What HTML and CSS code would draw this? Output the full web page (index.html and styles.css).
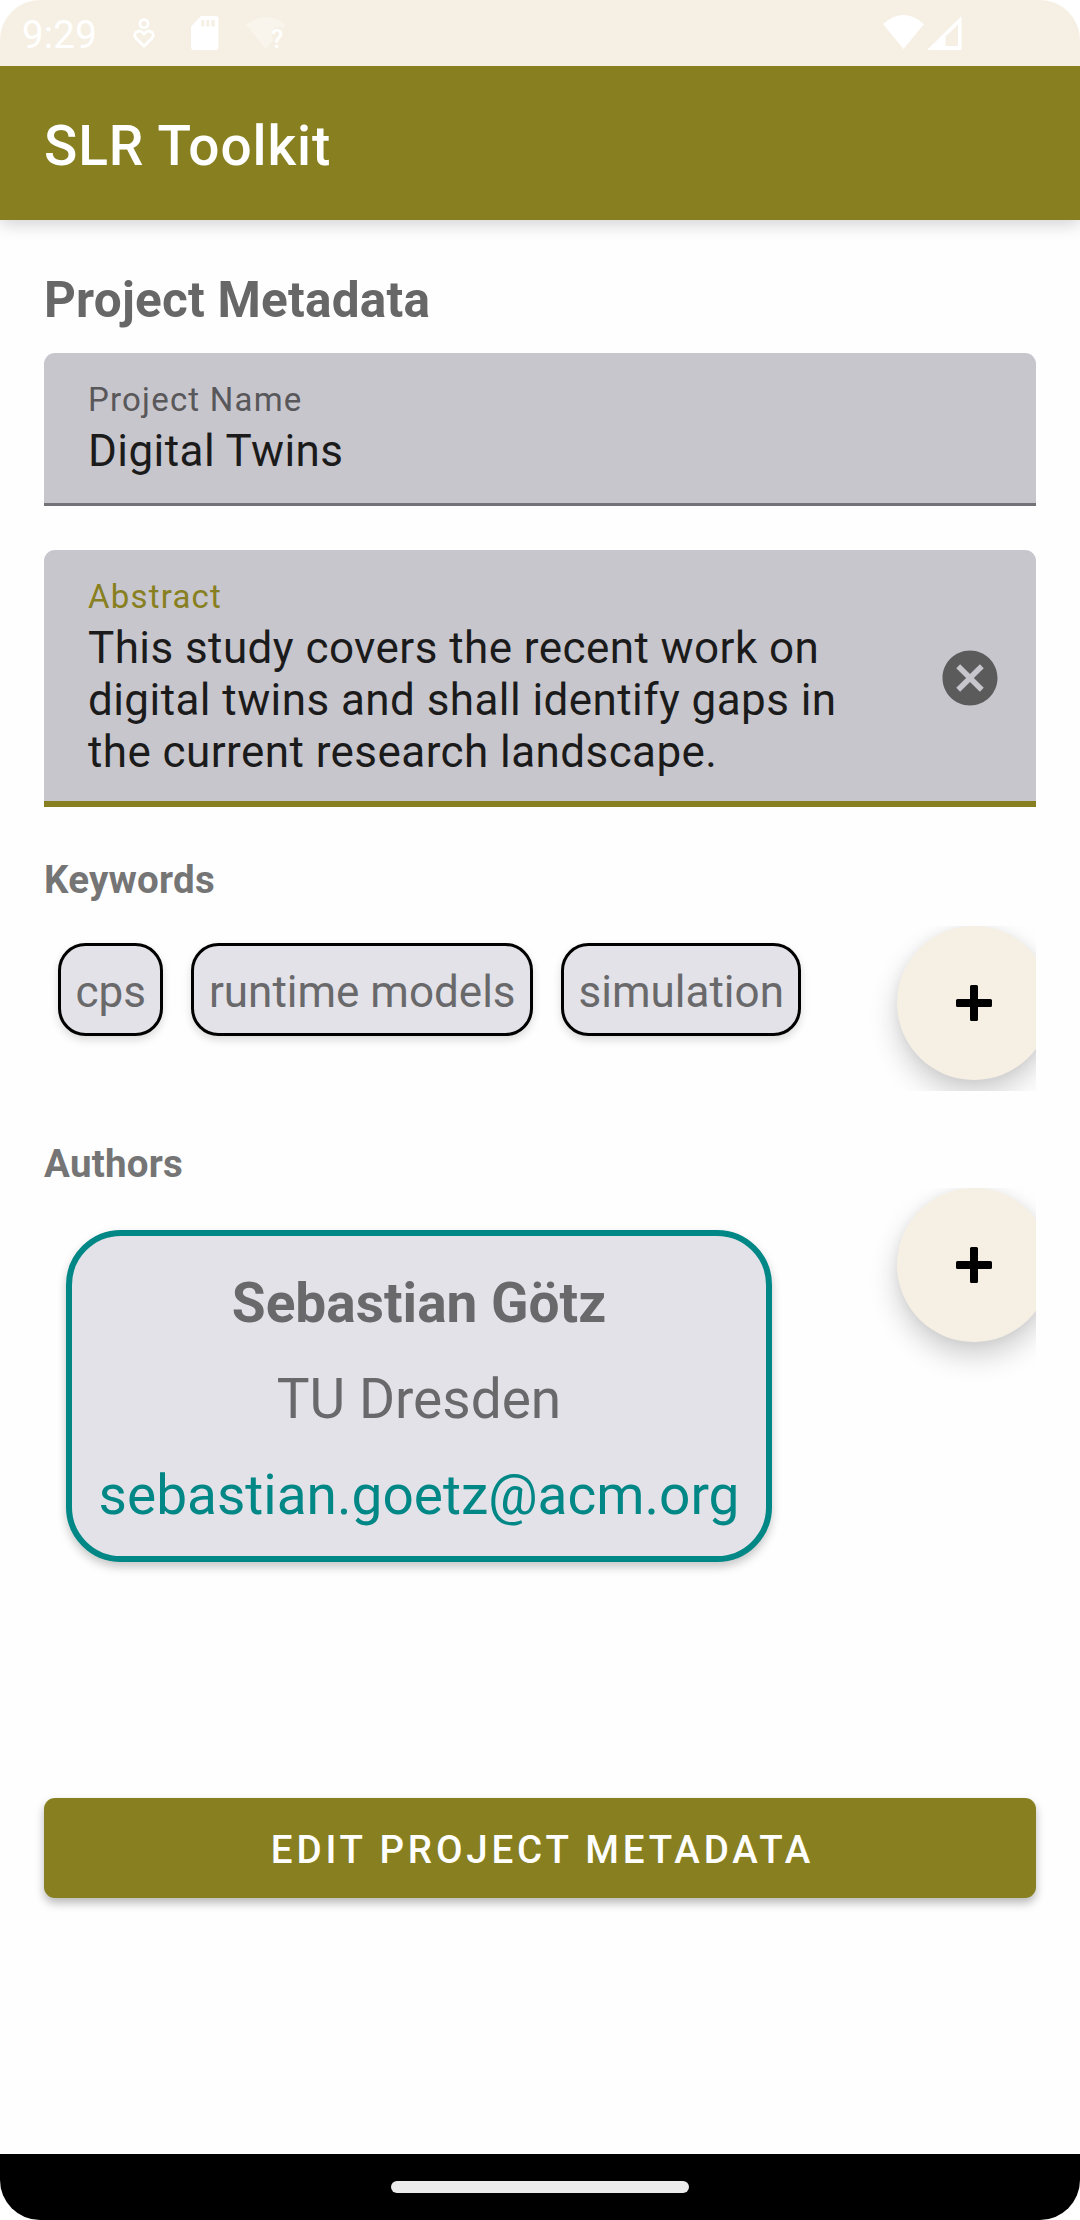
FILE: index.html
```html
<!DOCTYPE html>
<html lang="en">
<head>
<meta charset="utf-8">
<title>SLR Toolkit</title>
<link rel="stylesheet" href="styles.css">
</head>
<body>
<div class="screen">
  <div class="status-bar">
    <span class="clock">9:29</span>
    <svg class="icon-care" width="22" height="30" viewBox="0 0 22 30" fill="none" stroke="#fff">
      <circle cx="11" cy="5.7" r="4.1" stroke-width="2.7"/>
      <path d="M11 28L3 20.200C-1 16 5 10.500 9.500 14.500L11 16L12.500 14.500C17 10.500 23 16 19 20.200Z" stroke-width="2.900"/>
    </svg>
    <svg class="icon-sd" width="28" height="34" viewBox="0 0 28 34" fill="#fff" fill-rule="evenodd">
      <path d="M10 0H24.500A3 3 0 0 1 27.500 3V31A3 3 0 0 1 24.500 34H3A3 3 0 0 1 0 31V10.500ZM10.300 4V10.500H13.300V4ZM15.300 4V10.500H18.300V4ZM20.300 4V10.500H23.800V4Z"/>
    </svg>
    <span class="wifi-unknown">
      <svg width="40" height="34" viewBox="0 0 40 34"><path d="M0 7.500Q20 -7.500 39.500 7.500L37 11C30 8 25 13 26 18L27 24L19.500 32Z" fill="#fff" fill-opacity=".3"/></svg>
      <b class="wifi-mark">?</b>
    </span>
    <svg class="icon-wifi" width="41" height="34" viewBox="0 0 41 34"><path d="M0 9Q20.500 -9 41 9L20.500 34Z" fill="#fff"/></svg>
    <svg class="icon-signal" width="35" height="34" viewBox="0 0 35 34"><path d="M34.500 0V34H0ZM31 8.500L18.500 20.500V30H31Z" fill="#fff" fill-rule="evenodd"/></svg>
  </div>
  <header class="app-bar"><h1 class="app-title">SLR Toolkit</h1></header>
  <main class="content">
    <h2 class="page-title">Project Metadata</h2>
    <div class="field">
      <div class="field-text">
        <div class="field-label">Project Name</div>
        <div class="field-value">Digital Twins</div>
      </div>
    </div>
    <div class="field focused">
      <div class="field-text">
        <div class="field-label">Abstract</div>
        <div class="field-value">This study covers the recent work on<br>digital twins and shall identify gaps in<br>the current research landscape.</div>
      </div>
      <svg class="clear" width="66" height="66" viewBox="0 0 24 24" fill="#5b5b5c"><path d="M12 2C6.470 2 2 6.470 2 12s4.470 10 10 10 10-4.470 10-10S17.530 2 12 2zm5 13.590L15.590 17 12 13.410 8.410 17 7 15.590 10.590 12 7 8.410 8.410 7 12 10.590 15.590 7 17 8.410 13.410 12 17 15.590z"/></svg>
    </div>
    <h3 class="section-title">Keywords</h3>
    <div class="keywords">
      <span class="chip">cps</span>
      <span class="chip">runtime models</span>
      <span class="chip">simulation</span>
      <button class="fab" aria-label="Add keyword"><svg width="38" height="38" viewBox="0 0 38 38"><path d="M15 2.500Q15 1 16.500 1H21.500Q23 1 23 2.500V15H35.500Q37 15 37 16.500V21.500Q37 23 35.500 23H23V35.500Q23 37 21.500 37H16.500Q15 37 15 35.500V23H2.500Q1 23 1 21.500V16.500Q1 15 2.500 15H15Z"/></svg></button>
    </div>
    <h3 class="section-title">Authors</h3>
    <div class="authors">
      <div class="author-card">
        <div class="author-name">Sebastian Götz</div>
        <div>TU Dresden</div>
        <div class="author-mail">sebastian.goetz@acm.org</div>
      </div>
      <button class="fab" aria-label="Add author"><svg width="38" height="38" viewBox="0 0 38 38"><path d="M15 2.500Q15 1 16.500 1H21.500Q23 1 23 2.500V15H35.500Q37 15 37 16.500V21.500Q37 23 35.500 23H23V35.500Q23 37 21.500 37H16.500Q15 37 15 35.500V23H2.500Q1 23 1 21.500V16.500Q1 15 2.500 15H15Z"/></svg></button>
    </div>
    <button class="edit">EDIT PROJECT METADATA</button>
  </main>
  <div class="nav-bar"><div class="handle"></div></div>
</div>
</body>
</html>
```
FILE: styles.css
```css
* { box-sizing: border-box; }

body {
  margin: 0;
  background: #fff;
  font-family: Roboto, "Liberation Sans", sans-serif;
}

h1, h2, h3 { margin: 0; }

button {
  border: 0;
  padding: 0;
  font-family: inherit;
}

svg { display: block; flex: none; }

.screen {
  display: flex;
  flex-direction: column;
  width: 1080px;
  height: 2220px;
  border-radius: 40px;
  overflow: hidden;
  background: #fefefe;
}

.status-bar {
  display: flex;
  align-items: flex-start;
  height: 66px;
  padding: 15px 118px 0 22px;
  background: #f6f0e4;
  color: #fff;
}

.clock {
  width: 111px;
  font-size: 38.5px;
  line-height: 40px;
  letter-spacing: .2px;
}

.icon-care { margin-top: 3px; }
.icon-sd { margin: 1px 0 0 36px; }

.wifi-unknown {
  position: relative;
  margin: 2px 0 0 27px;
}

.wifi-mark {
  position: absolute;
  left: 25px;
  top: 10px;
  font-size: 25px;
  font-weight: 500;
  line-height: 26px;
}

.icon-wifi { margin-left: auto; }
.icon-signal { margin: 1px 0 0 3px; }

.app-bar {
  height: 154px;
  padding: 7px 44px 0;
  background: #888020;
  box-shadow: 0 4px 16px rgba(0, 0, 0, .18);
  clip-path: inset(0 0 -30px);
}

.app-title {
  font-size: 55px;
  font-weight: 500;
  line-height: 147px;
  letter-spacing: .9px;
  color: #fff;
}

.content {
  flex: 1;
  display: flex;
  flex-direction: column;
  padding: 51px 44px 0;
}

.page-title {
  margin-bottom: 24px;
  font-size: 49.5px;
  font-weight: 700;
  line-height: 58px;
  letter-spacing: .22px;
  color: #676767;
}

.field {
  display: flex;
  align-items: center;
  justify-content: space-between;
  height: 153px;
  margin-bottom: 44px;
  padding: 0 33px 0 44px;
  border-radius: 11px 11px 0 0;
  background: #c8c6cd;
  box-shadow: inset 0 -3px #737277;
}

.field.focused {
  height: 257px;
  margin-bottom: 0;
  box-shadow: inset 0 -6px #888020;
}

.field-text { align-self: flex-start; padding-top: 27px; }

.field-label {
  margin-bottom: 5px;
  font-size: 33px;
  line-height: 40px;
  letter-spacing: 1.2px;
  color: #58575a;
}

.focused .field-label { color: #888020; }

.field-value {
  font-size: 44px;
  line-height: 52px;
  letter-spacing: .43px;
  white-space: nowrap;
  color: #1b1b1b;
}

.clear { margin-bottom: 2px; }

.section-title {
  margin-top: 50px;
  font-size: 38.5px;
  font-weight: 700;
  line-height: 46px;
  letter-spacing: .22px;
  color: #757575;
}

.keywords {
  display: flex;
  align-items: flex-start;
  gap: 28px;
  height: 165px;
  margin-top: 23px;
  padding-left: 14px;
  overflow: hidden;
}

.chip {
  height: 93px;
  margin-top: 17px;
  padding: 20px 14.500px 0;
  border: 3px solid #000;
  border-radius: 27.500px;
  background: #e3e2e8;
  box-shadow: 0 4px 8px rgba(0, 0, 0, .14);
  font-size: 44px;
  line-height: 52px;
  color: #69696b;
}

.fab {
  flex: none;
  display: grid;
  place-items: center;
  width: 154px;
  height: 154px;
  margin: 0 -15px 0 auto;
  border-radius: 50%;
  background: #f6f0e4;
  box-shadow: 0 14px 28px rgba(0, 0, 0, .19), 0 0 12px rgba(0, 0, 0, .05);
}

.authors {
  display: flex;
  align-items: flex-start;
  height: 566px;
  margin: 1px 0 44px;
  padding-left: 22px;
  overflow: hidden;
}

.author-card {
  display: flex;
  flex-direction: column;
  gap: 32px;
  width: 706px;
  height: 332px;
  margin-top: 42px;
  padding-top: 35px;
  border: 6px solid #018786;
  border-radius: 55px;
  background: #e3e2e8;
  box-shadow: 0 5px 10px rgba(0, 0, 0, .22);
  font-size: 55px;
  line-height: 64px;
  text-align: center;
  color: #69696b;
}

.author-name { font-weight: 700; }
.author-mail { color: #018786; }

.edit {
  height: 100px;
  padding: 3px 0 0 5px;
  border-radius: 11px;
  background: #888020;
  box-shadow: 0 5px 10px rgba(0, 0, 0, .28);
  font-size: 38.500px;
  font-weight: 500;
  letter-spacing: 3.840px;
  color: #fff;
}

.nav-bar {
  display: flex;
  justify-content: center;
  height: 66px;
  padding-top: 27px;
  background: #000;
}

.handle {
  width: 298px;
  height: 12px;
  border-radius: 6px;
  background: #ebebeb;
}
```
